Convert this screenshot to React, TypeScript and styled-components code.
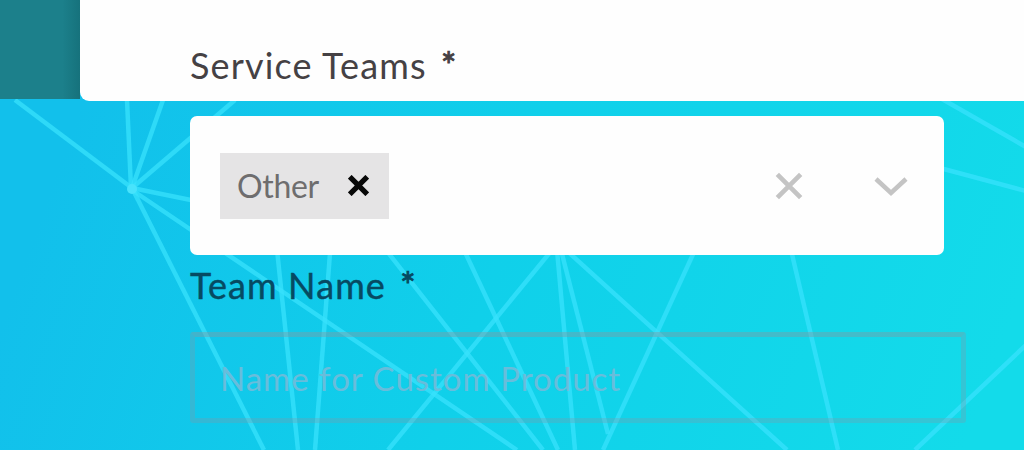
import React, { useState } from "react";
import styled, { createGlobalStyle } from "styled-components";

const GlobalStyle = createGlobalStyle`
    * {
        box-sizing: border-box;
    }
    body {
        margin: 0;
        overflow: hidden;
        font-family: Lato, "Open Sans", sans-serif;
    }
`;

const Page = styled.main`
    position: relative;
    z-index: 0;
    display: flex;
    flex-direction: column;
    height: 450px;
    overflow: hidden;
    background: linear-gradient(110deg, #12c0eb 10%, #10d0ea 50%, #13dbea 95%);
`;
const Network = styled.svg`
    position: absolute;
    z-index: -1;
    top: 0;
    left: 0;
    width: 100%;
    height: 100%;
    stroke: #38e2fc;
    stroke-width: 4.5;
    stroke-opacity: 0.75;
`;
const Top = styled.header`
    display: flex;
    height: 101px;
`;
const Side = styled.div`
    width: 80px;
    height: 99px;
    background: linear-gradient(90deg, #1c808b 78%, #16727c);
`;
const Panel = styled.div`
    display: flex;
    flex: 1;
    padding: 40px 0 0 110px;
    border-bottom-left-radius: 9px;
    background: #fefefe;
`;
const Label = styled.label<{ color: string; spacing: number; strong?: boolean }>`
    display: block;
    font-size: 36px;
    line-height: 50px;
    font-weight: 400;
    letter-spacing: ${({ spacing }) => spacing}px;
    white-space: pre;
    color: ${({ color }) => color};
    -webkit-text-stroke: ${({ strong }) => (strong ? "0.4px" : "0")};
`;
const Required = styled.span`
    margin-left: 4px;
    -webkit-text-stroke: 1px;
`;
const Form = styled.form`
    display: flex;
    flex-direction: column;
    align-items: flex-start;
    padding: 15px 0 0 190px;
`;
const Select = styled.div`
    display: flex;
    align-items: center;
    width: 754px;
    height: 139px;
    margin-bottom: 5px;
    padding: 0 35px 0 30px;
    border-radius: 7px;
    background: #fefefe;
`;
const Tag = styled.div`
    display: flex;
    align-items: center;
    justify-content: space-between;
    width: 169px;
    height: 66px;
    margin-right: auto;
    padding: 0 20px 0 17px;
    background: #e5e4e5;
    font-size: 32px;
    letter-spacing: -0.3px;
    color: #6e6d6e;
`;
const IconButton = styled.button`
    display: flex;
    padding: 0;
    border: 0;
    background: none;
`;
const Actions = styled.div`
    display: flex;
    align-items: center;
    gap: 70px;
`;
const Input = styled.input`
    width: 776px;
    height: 91px;
    margin-top: 22px;
    padding: 0 25px;
    border: 5px solid rgba(130, 155, 170, 0.32);
    border-top-color: rgba(130, 155, 165, 0.45);
    border-radius: 3px;
    outline: none;
    background: transparent;
    font: 400 33px Lato, "Open Sans", sans-serif;
    letter-spacing: 1px;
    color: #0b4b64;
    &::placeholder {
        color: #68bddb;
        opacity: 1;
    }
`;

const lines = [
    [15, 100, 132, 188],
    [127, 100, 131, 188],
    [163, 100, 132, 188],
    [235, 100, 132, 188],
    [132, 188, 230, 208],
    [132, 190, 517, 450],
    [132, 188, 264, 450],
    [276, 240, 298, 450],
    [331, 240, 315, 450],
    [386, 250, 543, 450],
    [388, 450, 552, 250],
    [464, 250, 558, 450],
    [557, 250, 575, 450],
    [561, 250, 608, 434],
    [566, 250, 787, 450],
    [695, 250, 603, 450],
    [791, 250, 838, 450],
    [915, 450, 1026, 345],
    [942, 99, 1026, 147],
    [940, 168, 1026, 191],
];

const Cross = ({ size, color, width }: { size: number; color: string; width: number }) => (
    <svg width={size} height={size} viewBox="0 0 24 24" stroke={color} strokeWidth={width}>
        <path d="M2 2L22 22M22 2L2 22" />
    </svg>
);

const App = () => {
    const [teams, setTeams] = useState(["Other"]);

    return (
        <>
            <GlobalStyle />
            <Page>
                <Network viewBox="0 0 1024 450" aria-hidden="true">
                    {lines.map(([x1, y1, x2, y2], idx) => (
                        <line key={idx} x1={x1} y1={y1} x2={x2} y2={y2} />
                    ))}
                    <circle cx="132" cy="189" r="5" fill="#48e3fc" stroke="none" />
                </Network>
                <Top>
                    <Side />
                    <Panel>
                        <Label color="#454144" spacing={1.15}>
                            Service Teams <Required>*</Required>
                        </Label>
                    </Panel>
                </Top>
                <Form>
                    <Select>
                        {teams.map((team) => (
                            <Tag key={team}>
                                {team}
                                <IconButton
                                    type="button"
                                    aria-label="Remove"
                                    onClick={() => setTeams(teams.filter((item) => item !== team))}
                                >
                                    <Cross size={21} color="#080808" width={6} />
                                </IconButton>
                            </Tag>
                        ))}
                        <Actions>
                            <IconButton type="button" aria-label="Clear" onClick={() => setTeams([])}>
                                <Cross size={28} color="#c4c4c4" width={4} />
                            </IconButton>
                            <IconButton type="button" aria-label="Open">
                                <svg width="36" height="24" viewBox="0 0 36 24" fill="none" stroke="#c4c4c4" strokeWidth="4.5">
                                    <path d="M3 5L18 19L33 5" />
                                </svg>
                            </IconButton>
                        </Actions>
                    </Select>
                    <Label color="#064a62" spacing={1.1} strong htmlFor="team-name">
                        Team Name <Required>*</Required>
                    </Label>
                    <Input id="team-name" placeholder="Name for Custom Product" />
                </Form>
            </Page>
        </>
    );
};

export default App;
